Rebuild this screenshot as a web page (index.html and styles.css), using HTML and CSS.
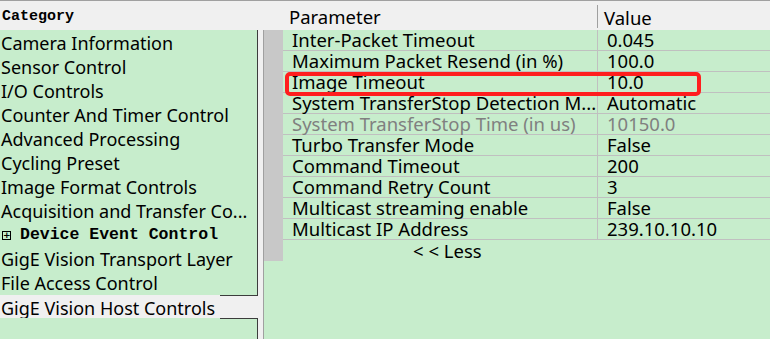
FILE: index.html
```html
<!DOCTYPE html>
<html lang="en">
<head>
    <meta charset="UTF-8">
    <title>Host Controls</title>
    <link rel="stylesheet" href="styles.css">
</head>
<body>
    <div class="window">
        <div class="category">
            <div class="head">Category</div>
            <div class="list">
                <div class="item">Camera Information</div>
                <div class="item">Sensor Control</div>
                <div class="item">I/O Controls</div>
                <div class="item">Counter And Timer Control</div>
                <div class="item">Advanced Processing</div>
                <div class="item">Cycling Preset</div>
                <div class="item">Image Format Controls</div>
                <div class="item">Acquisition and Transfer Co...</div>
                <div class="item group"><span class="plus">+</span>Device Event Control</div>
                <div class="item">GigE Vision Transport Layer</div>
                <div class="item">File Access Control</div>
            </div>
            <div class="item selected">GigE Vision Host Controls</div>
            <div class="list rest"></div>
        </div>

        <div class="params">
            <div class="head cols">
                <div class="col-name">Parameter</div>
                <div class="col-value">Value</div>
            </div>
            <div class="grid">
                <div class="gutter"></div>
                <div class="rows">
                    <div class="row"><div class="name">Inter-Packet Timeout</div><div class="value">0.045</div></div>
                    <div class="row"><div class="name">Maximum Packet Resend (in %)</div><div class="value">100.0</div></div>
                    <div class="row"><div class="name">Image Timeout</div><div class="value">10.0</div></div>
                    <div class="row"><div class="name">System TransferStop Detection M...</div><div class="value">Automatic</div></div>
                    <div class="row disabled"><div class="name">System TransferStop Time (in us)</div><div class="value">10150.0</div></div>
                    <div class="row"><div class="name">Turbo Transfer Mode</div><div class="value">False</div></div>
                    <div class="row"><div class="name">Command Timeout</div><div class="value">200</div></div>
                    <div class="row"><div class="name">Command Retry Count</div><div class="value">3</div></div>
                    <div class="row"><div class="name">Multicast streaming enable</div><div class="value">False</div></div>
                    <div class="row"><div class="name">Multicast IP Address</div><div class="value">239.10.10.10</div></div>
                    <div class="less">&lt; &lt; Less</div>
                </div>
                <div class="mark"></div>
            </div>
        </div>
    </div>
</body>
</html>
```

FILE: styles.css
```css
* {
    margin: 0;
    padding: 0;
    box-sizing: border-box;
}

body {
    background: #f0f0f0;
    font-family: 'Noto Sans', sans-serif;
    color: #000;
    overflow: hidden;
}

.window {
    width: 770px;
    height: 339px;
    border-top: 1px solid #a0a0a0;
    display: flex;
    gap: 5px;
}

.head {
    height: 29px;
    background: #f0f0f0;
}

/* left: category list */
.category {
    width: 258px;
    display: flex;
    flex-direction: column;
}

.category .head {
    font-family: 'Liberation Mono', monospace;
    font-weight: bold;
    font-size: 15px;
    line-height: 32px;
    padding-left: 2px;
}

.list {
    background: #c7edcc;
    border-right: 1px solid #3c3c3c;
    padding-top: 1px;
}

.list.rest {
    flex: 1;
    padding: 0;
    border-top: 1px solid #3c3c3c;
    margin-left: 220px;
    position: relative;
}

.list.rest::before {
    content: '';
    position: absolute;
    left: -220px;
    top: -1px;
    width: 220px;
    bottom: 0;
    background: #c7edcc;
}

.item {
    height: 24px;
    line-height: 24px;
    font-size: 18px;
    padding-left: 1px;
    white-space: nowrap;
}

.item.group {
    font-family: 'Liberation Mono', monospace;
    font-weight: bold;
    font-size: 16.5px;
    display: flex;
    align-items: center;
}

.plus {
    width: 9px;
    height: 9px;
    border: 1px solid #000;
    font-family: 'DejaVu Sans', sans-serif;
    font-size: 9px;
    line-height: 7px;
    text-align: center;
    margin: 0 9px 0 1px;
}

.item.selected {
    background: #f0f0f0;
    height: 23px;
    border-top: 1px solid transparent;
    position: relative;
}

.item.selected::before {
    content: '';
    position: absolute;
    left: 220px;
    right: 0;
    top: -1px;
    border-top: 1px solid #3c3c3c;
}

/* right: parameter grid */
.params {
    flex: 1;
    display: flex;
    flex-direction: column;
}

.cols {
    display: flex;
    font-size: 18.5px;
    line-height: 32px;
}

.col-name {
    width: 334px;
    padding-left: 26px;
}

.col-value {
    flex: 1;
    padding-left: 6px;
    border-left: 1px solid #a0a0a0;
    margin: 4px 0 2px;
    line-height: 25px;
}

.grid {
    flex: 1;
    display: flex;
    align-items: flex-start;
    background: #c7edcc;
    border-left: 1px solid #a0a0a0;
    position: relative;
}

.gutter {
    width: 19px;
    height: 231px;
    background: #c8c8c8;
}

.rows {
    flex: 1;
}

.row {
    display: flex;
    height: 21px;
    border-bottom: 1px solid #c0c0c0;
    font-size: 18.5px;
    line-height: 20px;
}

.name {
    width: 314px;
    padding-left: 9px;
    white-space: nowrap;
}

.value {
    flex: 1;
    padding-left: 9px;
    border-left: 1px solid #c0c0c0;
}

.row.disabled {
    color: #808080;
}

.less {
    height: 21px;
    line-height: 21px;
    font-size: 18.5px;
    padding-left: 130px;
}

.mark {
    position: absolute;
    left: 21px;
    top: 42px;
    width: 416px;
    height: 24px;
    border: 4px solid #ff1e1e;
    border-radius: 5px;
}
```
